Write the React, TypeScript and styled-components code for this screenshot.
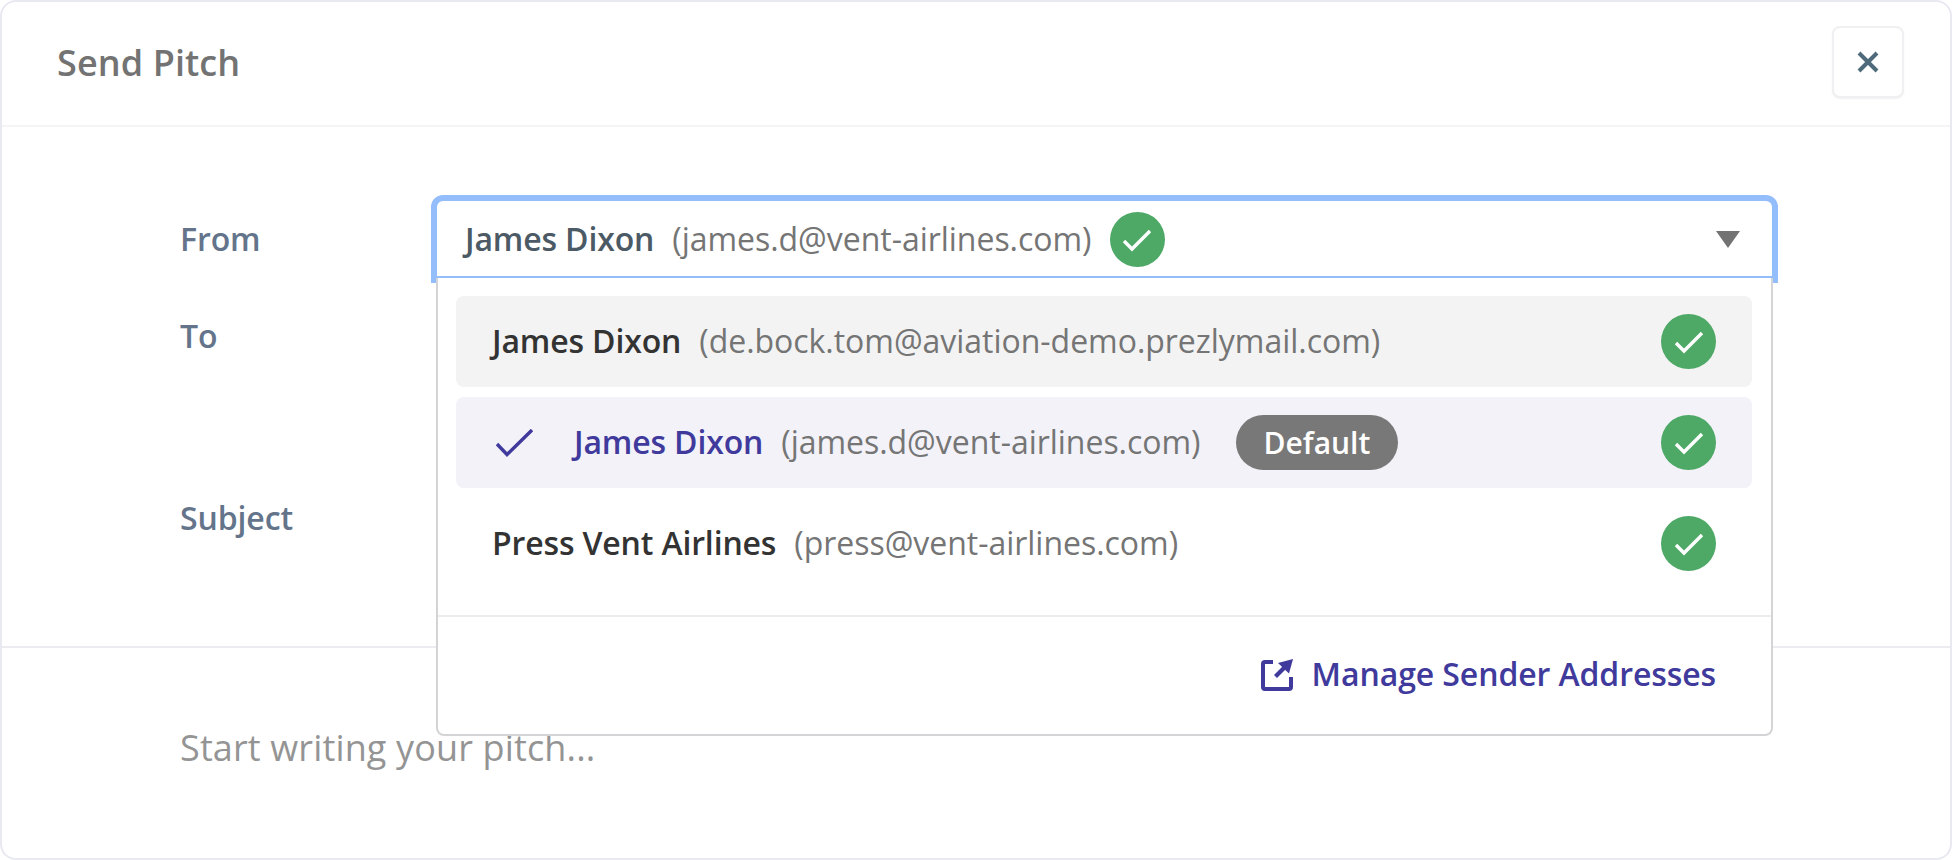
import React from "react"
import styled, { createGlobalStyle } from "styled-components"

const GlobalStyle = createGlobalStyle`
  html, body {
    margin: 0;
    padding: 0;
    background: #fff;
  }
  * {
    box-sizing: border-box;
  }
  body {
    font-family: "Open Sans", "Liberation Sans", sans-serif;
  }
`

const Card = styled.div`
  width: 1952px;
  height: 860px;
  border: 2px solid #e9e9f2;
  border-radius: 16px;
  background: #fff;
  overflow: hidden;
`

const Header = styled.div`
  height: 125px;
  padding: 24px 46px 0 55px;
  border-bottom: 2px solid #f4f4f6;
  display: flex;
  align-items: flex-start;
  justify-content: space-between;
`

const Title = styled.h1`
  margin: 12px 0 0;
  font-size: 36px;
  line-height: 50px;
  font-weight: 600;
  letter-spacing: 0.1px;
  color: #737373;
`

const CloseButton = styled.button`
  width: 72px;
  height: 72px;
  padding: 0;
  border: 2px solid #f0f0f2;
  border-radius: 8px;
  background: #fff;
  box-shadow: 0 1px 2px rgba(0, 0, 0, 0.06);
  display: flex;
  align-items: center;
  justify-content: center;
`

const Form = styled.div`
  height: 521px;
  padding: 68px 172px 0 178px;
  border-bottom: 2px solid #ececf0;
  display: grid;
  grid-template-rows: 83px 182px 97px;
`

const Row = styled.div`
  display: grid;
  grid-template-columns: 251px 1fr;
  align-items: start;
`

const Label = styled.label<{ $top: number }>`
  font-size: 32px;
  line-height: 44px;
  font-weight: 600;
  letter-spacing: -0.1px;
  color: #64748b;
  margin-top: ${(p) => p.$top}px;
`

const SelectWrap = styled.div`
  position: relative;
`

const Select = styled.div`
  height: 83px;
  padding: 2px 32px 0 28px;
  border-style: solid;
  border-color: #94bdfb;
  border-width: 6px 6px 2px;
  border-radius: 12px 12px 0 0;
  background: #fff;
  display: flex;
  align-items: center;
  gap: 18px;
  font-size: 32px;
  position: relative;
  &::before,
  &::after {
    content: "";
    position: absolute;
    bottom: -7px;
    width: 6px;
    height: 7px;
    background: #94bdfb;
  }
  &::before {
    left: -6px;
  }
  &::after {
    right: -6px;
  }
`

const Name = styled.span<{ $color: string }>`
  margin-bottom: 3px;
  font-weight: 600;
  letter-spacing: -0.15px;
  color: ${(p) => p.$color};
  white-space: nowrap;
`

const Email = styled.span`
  margin-bottom: 3px;
  color: #757575;
  letter-spacing: -0.03px;
  white-space: nowrap;
`

const Caret = styled.span`
  margin-left: auto;
  width: 0;
  height: 0;
  border-left: 12px solid transparent;
  border-right: 12px solid transparent;
  border-top: 17px solid #737373;
`

const Dropdown = styled.div`
  position: absolute;
  top: 83px;
  left: 5px;
  right: 5px;
  height: 458px;
  border: 2px solid #d4d4d6;
  border-top: none;
  border-radius: 0 0 8px 8px;
  background: #fff;
  padding: 18px 0 0;
  z-index: 2;
`

const List = styled.div`
  padding: 0 19px 0 18px;
  display: flex;
  flex-direction: column;
  gap: 10px;
`

const Option = styled.div<{ $bg?: string }>`
  height: 91px;
  padding: 0 36px;
  border-radius: 8px;
  background: ${(p) => p.$bg || "transparent"};
  display: flex;
  align-items: center;
  gap: 18px;
  font-size: 32px;
`

const Tick = styled.span`
  width: 37px;
  margin-right: 23px;
  margin-left: 4px;
  display: flex;
`

const Badge = styled.span`
  margin-left: 17px;
  height: 55px;
  padding: 0 28px;
  border-radius: 28px;
  background: #787878;
  color: #fff;
  font-size: 30px;
  font-weight: 600;
  display: flex;
  align-items: center;
`

const Verified = styled.span<{ $push?: boolean }>`
  width: 55px;
  height: 55px;
  border-radius: 50%;
  background: #4ea866;
  flex: none;
  display: flex;
  align-items: center;
  justify-content: center;
  margin-left: ${(p) => (p.$push ? "auto" : "0")};
`

const Footer = styled.div`
  margin-top: 26px;
  border-top: 2px solid #ececee;
  height: 118px;
  padding: 0 55px 0 0;
  display: flex;
  align-items: center;
  justify-content: flex-end;
  gap: 19px;
`

const ManageLink = styled.a`
  margin-bottom: 4px;
  font-size: 32px;
  font-weight: 600;
  letter-spacing: -0.1px;
  color: #403a9c;
`

const Editor = styled.div`
  padding: 75px 178px 0;
  font-size: 36px;
  line-height: 50px;
  letter-spacing: 0.14px;
  color: #949494;
`

const CheckMark = () => (
  <svg width="30" height="24" viewBox="0 0 30 24" fill="none">
    <path d="M2 13 L10 21 L28 3" stroke="#fff" strokeWidth="3.4" />
  </svg>
)

const senders = [
  { name: "James Dixon", email: "(de.bock.tom@aviation-demo.prezlymail.com)", bg: "#f3f3f3" },
  { name: "James Dixon", email: "(james.d@vent-airlines.com)", bg: "#f2f2f8", selected: true },
  { name: "Press Vent Airlines", email: "(press@vent-airlines.com)" }
]

export default function App() {
  return (
    <Card>
      <GlobalStyle />
      <Header>
        <Title>Send Pitch</Title>
        <CloseButton type="button" aria-label="Close">
          <svg width="22" height="22" viewBox="0 0 22 22" fill="none">
            <path d="M2 2 L20 20 M20 2 L2 20" stroke="#4f6b7b" strokeWidth="4" />
          </svg>
        </CloseButton>
      </Header>
      <Form>
        <Row>
          <Label $top={22}>From</Label>
          <SelectWrap>
            <Select>
              <Name $color="#4b5a65">James Dixon</Name>
              <Email>(james.d@vent-airlines.com)</Email>
              <Verified>
                <CheckMark />
              </Verified>
              <Caret />
            </Select>
            <Dropdown>
              <List>
                {senders.map((s, i) => (
                  <Option key={i} $bg={s.bg}>
                    {s.selected && (
                      <Tick>
                        <svg width="37" height="28" viewBox="0 0 37 28" fill="none">
                          <path d="M1 15 L11 25.5 L36 1" stroke="#403a9c" strokeWidth="3.4" />
                        </svg>
                      </Tick>
                    )}
                    <Name $color={s.selected ? "#403a9c" : "#333333"}>{s.name}</Name>
                    <Email>{s.email}</Email>
                    {s.selected && <Badge>Default</Badge>}
                    <Verified $push>
                      <CheckMark />
                    </Verified>
                  </Option>
                ))}
              </List>
              <Footer>
                <svg width="32" height="32" viewBox="0 0 32 32" fill="none">
                  <path
                    d="M12 3 H4 Q2 3 2 5 V28 Q2 30 4 30 H28 Q30 30 30 28 V18"
                    stroke="#403a9c"
                    strokeWidth="4"
                  />
                  <path d="M14.5 17.5 L23 9" stroke="#403a9c" strokeWidth="4.2" />
                  <path d="M17 4 L32 0 L28 14.5 Z" fill="#403a9c" />
                </svg>
                <ManageLink>Manage Sender Addresses</ManageLink>
              </Footer>
            </Dropdown>
          </SelectWrap>
        </Row>
        <Row>
          <Label $top={36}>To</Label>
        </Row>
        <Row>
          <Label $top={36}>Subject</Label>
        </Row>
      </Form>
      <Editor>Start writing your pitch...</Editor>
    </Card>
  )
}
